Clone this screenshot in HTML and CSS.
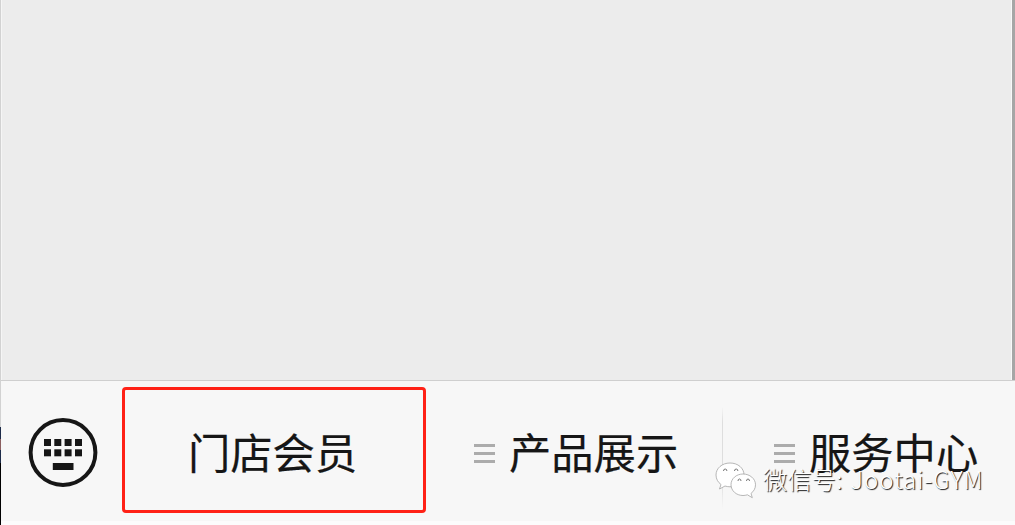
FILE: index.html
```
<!DOCTYPE html>
<html lang="zh-CN">
<head>
  <meta charset="UTF-8" />
  <meta name="viewport" content="width=device-width, initial-scale=1.0"/>
  <title>门店会员</title>
  <link rel="stylesheet" href="styles.css">
</head>
<body>
  <div class="screen">
    <div class="edge"></div>
    <div class="app">
      <div class="chat"></div>

      <div class="menu-bar">
        <div class="keyboard">
          <svg width="70" height="70" viewBox="0 0 70 70">
            <circle cx="35" cy="34.5" r="32.4" fill="none" stroke="#161616" stroke-width="4"/>
            <g fill="#161616">
              <rect x="16" y="21" width="7" height="7"/>
              <rect x="26.3" y="21" width="7" height="7"/>
              <rect x="36.6" y="21" width="7" height="7"/>
              <rect x="47" y="21" width="7" height="7"/>
              <rect x="16" y="31.3" width="7" height="7"/>
              <rect x="26.3" y="31.3" width="7" height="7"/>
              <rect x="36.6" y="31.3" width="7" height="7"/>
              <rect x="47" y="31.3" width="7" height="7"/>
              <rect x="24.8" y="45" width="20.7" height="7"/>
            </g>
          </svg>
        </div>
        <div class="menu-item active">门店会员</div>
        <div class="menu-item">
          <div class="lines"><span></span><span></span><span></span></div>
          产品展示
        </div>
        <div class="menu-item last">
          <div class="lines"><span></span><span></span><span></span></div>
          服务中心
        </div>
      </div>
    </div>
  </div>

  <!-- Watermark -->
  <div class="watermark">
    <svg width="42" height="38" viewBox="0 0 42 38">
      <g fill="#fff" stroke="#999" stroke-width="0.7">
        <path d="M15 1C7 1 1 6.300 1 13c0 4 2 7.300 5 9.500L4.500 27l5.500-3c1.600.5 3.300.8 5 .8 8 0 14-5.200 14-11.900S23 1 15 1z"/>
        <path d="M28 12C21.300 12 16 16.700 16 22.700S21.300 33.500 28 33.500c1.600 0 3-.3 4.400-.7l4.900 2.900-1.300-4.300c2.800-2 4.500-5.100 4.500-8.700C40.500 16.700 34.800 12 28 12z"/>
      </g>
      <g fill="none" stroke="#777" stroke-width="1">
        <path d="M8.500 9q0-2 1.700-2t1.700 2M19.500 9q0-2 1.700-2t1.700 2M23 19q0-2 1.500-2t1.500 2M31.500 19q0-2 1.500-2t1.500 2"/>
      </g>
    </svg>
    <span class="wm-label">微信号:</span>
    <span class="wm-name">Jootai-GYM</span>
  </div>
</body>
</html>
```

FILE: styles.css
```
body {
  margin: 0;
  font-family: "Noto Sans CJK SC", sans-serif;
  background: #f7f7f7;
  color: #161616;
  overflow: hidden;
}
.screen {
  display: flex;
  width: 1015px;
  height: 525px;
}
.edge {
  width: 1px;
  background: linear-gradient(#d2d2d2 427px, #1d2b49 427px, #1d2b49 439px, #8b5f60 439px, #8b5f60 450px, #1d2b49 450px, #1d2b49 463px, #000 463px);
}
.app {
  flex: 1;
  display: flex;
  flex-direction: column;
}
.chat {
  height: 380px;
  box-sizing: border-box;
  background: #ececec;
  border-left: 1px solid #f5f5f5;
  border-right: 3px solid #a6a6a6;
  box-shadow: inset -1px 0 #f8f8f8;
}
.menu-bar {
  flex: 1;
  display: flex;
  box-sizing: border-box;
  background: #f7f7f7;
  border-top: 1px solid #cfcfcf;
  border-bottom: 4px solid #fcfcfc;
}
.keyboard {
  width: 121px;
  box-sizing: border-box;
  padding: 37px 0 0 27px;
}
.menu-item {
  display: flex;
  box-sizing: border-box;
  width: 297px;
  height: 126px;
  margin-top: 6px;
  padding: 33px 0 0 48px;
  font-size: 42.3px;
  line-height: 62px;
  white-space: nowrap;
  -webkit-text-stroke: 0.2px #161616;
}
.menu-item.active {
  width: 304px;
  padding: 30px 0 0 63px;
  border: 3px solid #ff2116;
  border-radius: 4px;
}
.menu-item.last {
  width: 292px;
  border-left: 1px solid;
  border-image: linear-gradient(transparent 16%, #dedede 28%, #dedede 75%, transparent 96%) 1;
  margin-left: -1px;
  padding-left: 51px;
}
.lines {
  width: 21px;
  margin: 24px 14px 0 0;
}
.lines span {
  display: block;
  height: 3px;
  margin-bottom: 5px;
  background: #acacac;
}
.watermark {
  position: absolute;
  left: 715px;
  top: 461px;
  display: flex;
  color: #fff;
  font-size: 24px;
  font-weight: 300;
  line-height: 36px;
  text-shadow: 1px 1px 1px #111;
  white-space: nowrap;
}
.watermark svg {
  margin-top: 1px;
}
.wm-label {
  margin-left: 6px;
  letter-spacing: 0.4px;
}
.wm-name {
  margin-left: 8px;
  letter-spacing: 1px;
}
```
